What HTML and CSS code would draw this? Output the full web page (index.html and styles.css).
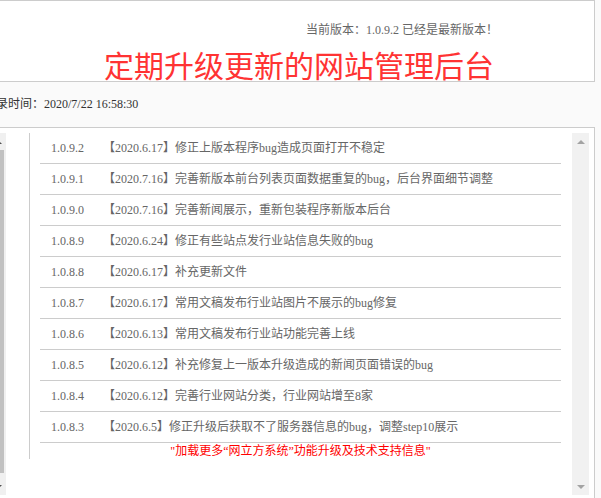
FILE: index.html
```html
<!DOCTYPE html>
<html lang="zh-CN">
<head>
<meta charset="utf-8">
<title>版本更新</title>
<link rel="stylesheet" href="styles.css">
</head>
<body>
<div class="page">
  <div class="top">
    <div class="cur">当前版本：1.0.9.2 已经是最新版本！</div>
    <div class="title">定期升级更新的网站管理后台</div>
  </div>
  <div class="strip">上次登录时间：2020/7/22 16:58:30</div>
  <div class="panel">
    <div class="side">
      <div class="sb">
        <div class="sb-btn"><span class="arr-up dark"></span></div>
        <div class="sb-thumb"></div>
        <div class="sb-fill"></div>
        <div class="sb-btn"><span class="arr-down dark"></span></div>
      </div>
    </div>
    <div class="list">
      <div class="row"><span class="vno">1.0.9.2</span><span class="desc">【2020.6.17】修正上版本程序bug造成页面打开不稳定</span></div>
      <div class="row"><span class="vno">1.0.9.1</span><span class="desc">【2020.7.16】完善新版本前台列表页面数据重复的bug，后台界面细节调整</span></div>
      <div class="row"><span class="vno">1.0.9.0</span><span class="desc">【2020.7.16】完善新闻展示，重新包装程序新版本后台</span></div>
      <div class="row"><span class="vno">1.0.8.9</span><span class="desc">【2020.6.24】修正有些站点发行业站信息失败的bug</span></div>
      <div class="row"><span class="vno">1.0.8.8</span><span class="desc">【2020.6.17】补充更新文件</span></div>
      <div class="row"><span class="vno">1.0.8.7</span><span class="desc">【2020.6.17】常用文稿发布行业站图片不展示的bug修复</span></div>
      <div class="row"><span class="vno">1.0.8.6</span><span class="desc">【2020.6.13】常用文稿发布行业站功能完善上线</span></div>
      <div class="row"><span class="vno">1.0.8.5</span><span class="desc">【2020.6.12】补充修复上一版本升级造成的新闻页面错误的bug</span></div>
      <div class="row"><span class="vno">1.0.8.4</span><span class="desc">【2020.6.12】完善行业网站分类，行业网站增至8家</span></div>
      <div class="row"><span class="vno">1.0.8.3</span><span class="desc">【2020.6.5】修正升级后获取不了服务器信息的bug，调整step10展示</span></div>
      <div class="more"><a class="more-link" href="#">"加载更多“网立方系统”功能升级及技术支持信息"</a></div>
    </div>
    <div class="sb sb-right">
      <div class="sb-btn"><span class="arr-up"></span></div>
      <div class="sb-fill"></div>
      <div class="sb-btn"><span class="arr-down"></span></div>
    </div>
  </div>
</div>
</body>
</html>
```

FILE: styles.css
```css
html, body {
  margin: 0;
  padding: 0;
}
body {
  background: #fafafa;
  overflow: hidden;
  font-family: "Liberation Serif", "Noto Sans CJK SC", serif;
  font-size: 12px;
  color: #666;
}
.page {
  margin-left: -60px;
  width: 655px;
}
.top {
  box-sizing: border-box;
  height: 82px;
  border: 1px solid #ccc;
  background: #fff;
  overflow: hidden;
  padding-top: 19px;
}
.cur {
  line-height: 20px;
  text-align: right;
  padding-right: 96px;
  color: #666;
}
.title {
  margin-top: 12px;
  line-height: 30px;
  font-size: 30px;
  text-align: right;
  padding-right: 100px;
  color: #f33;
  white-space: nowrap;
}
.strip {
  height: 45px;
  line-height: 45px;
  padding-left: 20px;
  color: #333;
}
.panel {
  box-sizing: border-box;
  border: 1px solid #ccc;
  background: #fff;
  padding: 5px;
  display: flex;
  align-items: flex-start;
}
.side {
  width: 60px;
  height: 362px;
  display: flex;
  justify-content: flex-end;
}
.sb {
  width: 17px;
  height: 362px;
  background: #f0f0f0;
  display: flex;
  flex-direction: column;
}
.sb-btn {
  height: 17px;
  display: flex;
  align-items: center;
  justify-content: center;
}
.sb-thumb {
  height: 323px;
  margin: 0 2px;
  background: #c1c1c1;
}
.sb-fill {
  flex: 1;
}
.arr-up {
  width: 0;
  height: 0;
  border-left: 4px solid transparent;
  border-right: 4px solid transparent;
  border-bottom: 4px solid #a3a3a3;
}
.arr-down {
  width: 0;
  height: 0;
  border-left: 4px solid transparent;
  border-right: 4px solid transparent;
  border-top: 4px solid #a3a3a3;
}
.arr-up.dark {
  border-bottom-color: #505050;
}
.arr-down.dark {
  border-top-color: #505050;
}
.list {
  margin-left: 23px;
  width: 521px;
  border-left: 1px solid #ccc;
  padding-left: 10px;
}
.row {
  height: 30px;
  line-height: 30px;
  border-bottom: 1px solid #ccc;
  padding-left: 11px;
  white-space: nowrap;
  display: flex;
}
.vno {
  width: 52px;
  flex: none;
}
.more {
  height: 16px;
  line-height: 16px;
  text-align: center;
}
.more-link {
  color: #f00;
  text-decoration: none;
}
.sb-right {
  margin-left: 11px;
  background: #f1f1f1;
}
```
